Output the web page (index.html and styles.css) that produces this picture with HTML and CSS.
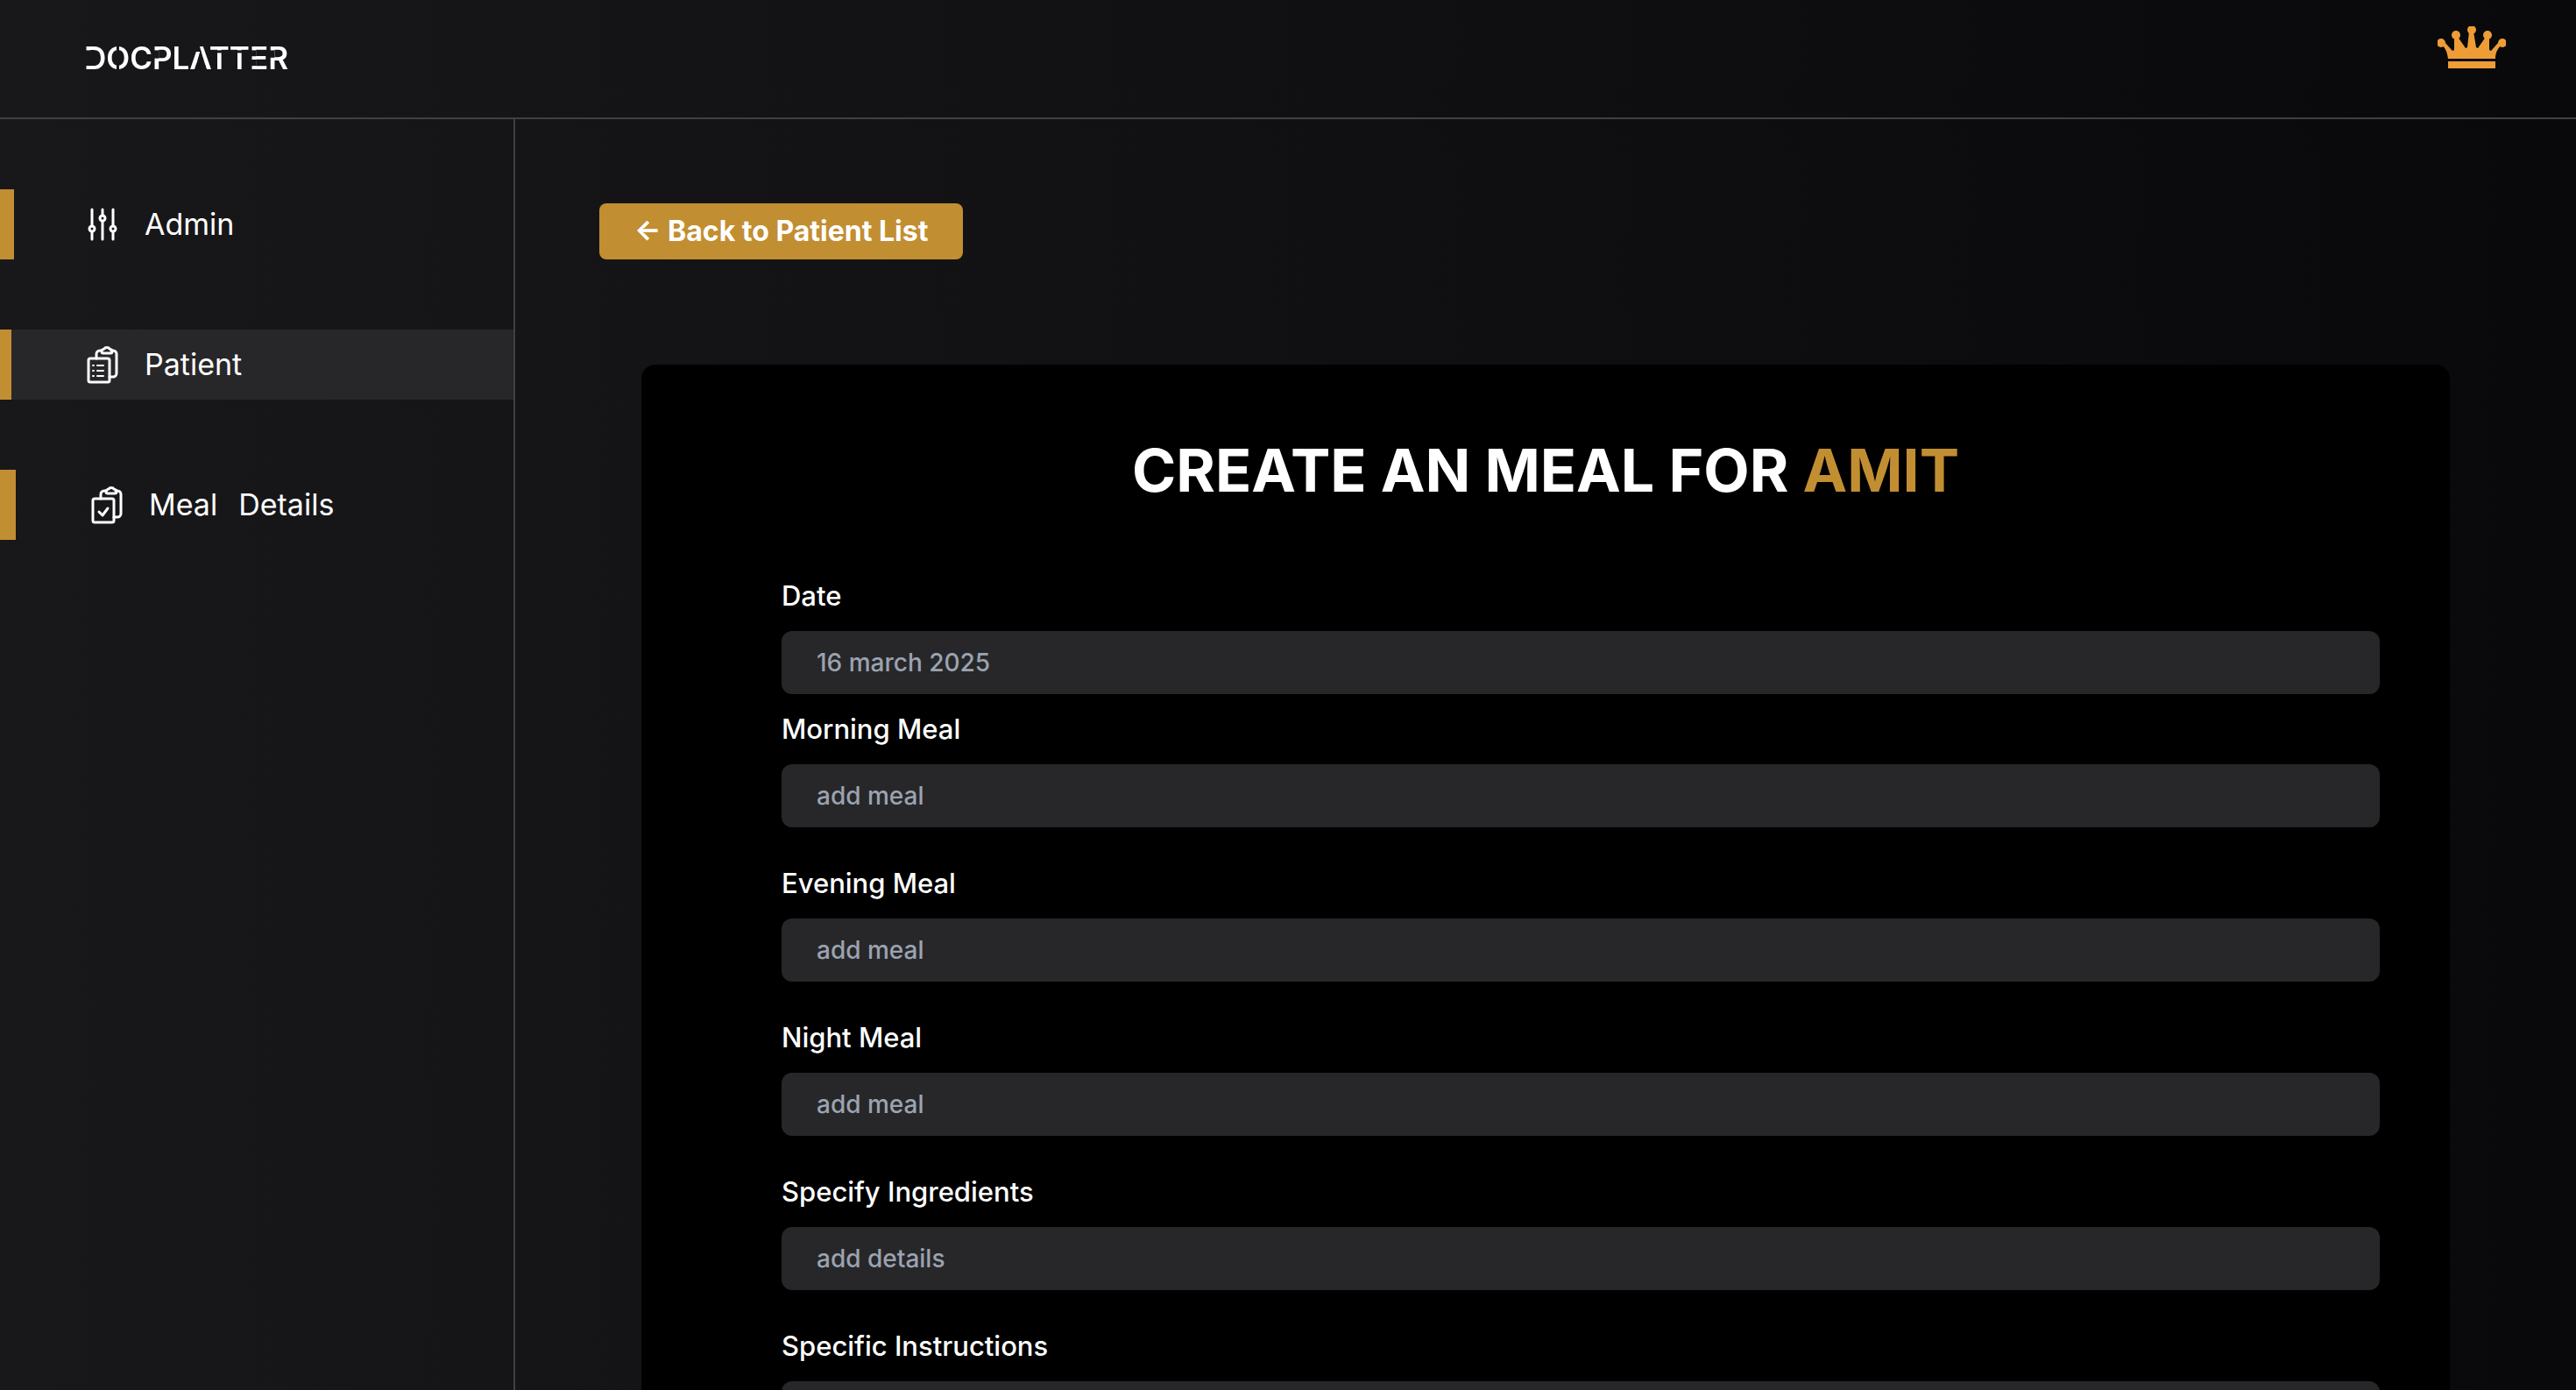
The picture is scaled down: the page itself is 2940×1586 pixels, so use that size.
FILE: index.html
```html
<!DOCTYPE html>
<html lang="en">
<head>
<meta charset="utf-8">
<title>Docplatter</title>
<link rel="stylesheet" href="styles.css">
</head>
<body>
<header class="topbar">
  <a class="logo" href="#" aria-label="Docplatter home">
    <svg class="wordmark" viewBox="0 0 260 40" aria-hidden="true">
      <!-- Stencil cuts through the letters -->
      <mask id="stencil" maskUnits="userSpaceOnUse" x="0" y="0" width="260" height="40">
        <rect width="260" height="40" fill="#fff"/>
        <g fill="#000">
          <rect x="0" y="10.4" width="8" height="17.7"/>
          <rect x="37" y="0" width="3" height="40"/>
          <rect x="78" y="10.4" width="7.3" height="9.2"/>
          <path d="M133 10.4L139.9 32H126.2Z"/>
          <path d="M120 0H130.500L133.500 12H120Z"/>
          <rect x="144" y="10.4" width="45" height="3"/>
          <rect x="189" y="10.4" width="7.2" height="6.8"/>
          <rect x="189" y="21" width="7.2" height="7.1"/>
          <rect x="211" y="10.4" width="6.4" height="8.4"/>
        </g>
      </mask>
      <text x="0" y="32" mask="url(#stencil)">DOCPLATTER</text>
    </svg>
  </a>
  <a class="premium" href="#" aria-label="Premium">
    <svg class="crown" viewBox="0 0 78 48" aria-hidden="true">
      <path d="M12 37 C11 29 9 25 4 20 L9 19 L17 28 L19 27 L19 12 L23 12 L32 25 L34 24 L36 6 L41 6 L44 24 L46 25 L55 12 L59 12 L59 27 L61 28 L69 19 L74 20 C69 25 66 29 66 37 Z"/>
      <rect x="12" y="40" width="54" height="8"/>
      <circle cx="4" cy="19" r="5"/><circle cx="21" cy="10" r="5"/><circle cx="39" cy="4" r="5"/><circle cx="57" cy="10" r="5"/><circle cx="74" cy="19" r="5"/>
    </svg>
  </a>
</header>
<div class="layout">
  <nav class="sidebar" aria-label="Main">
    <a class="nav-item" href="#">
      <svg class="icon" viewBox="0 0 48 48" aria-hidden="true"><path d="M12 7v18M12 33v8M24 7v6M24 21v20M36 7v18M36 33v8"/><circle cx="12" cy="29" r="3"/><circle cx="24" cy="17" r="3"/><circle cx="36" cy="29" r="3"/></svg>
      <span>Admin</span>
    </a>
    <a class="nav-item active" href="#" aria-current="page">
      <svg class="icon" viewBox="0 0 48 48" aria-hidden="true"><path d="M17 17v-5a4 4 0 0 1 4-4h2M34 8h2a4 4 0 0 1 4 4v22a4 4 0 0 1-4 4h-4"/><path d="M25 11a2 2 0 0 1-2-2c0-2 1-2 3-3 1-2 5-2 6 0 2 1 3 1 3 3a2 2 0 0 1-2 2z"/><rect x="8" y="17" width="24" height="27" rx="2"/><path d="M18 25h7M18 31h7M18 37h7M13 25h1M13 31h1M13 37h1" stroke-width="2"/></svg>
      <span>Patient</span>
    </a>
    <a class="nav-item meals" href="#">
      <svg class="icon" viewBox="0 0 48 48" aria-hidden="true"><path d="M17 17v-5a4 4 0 0 1 4-4h2M34 8h2a4 4 0 0 1 4 4v22a4 4 0 0 1-4 4h-4"/><path d="M25 11a2 2 0 0 1-2-2c0-2 1-2 3-3 1-2 5-2 6 0 2 1 3 1 3 3a2 2 0 0 1-2 2z"/><rect x="8" y="17" width="24" height="27" rx="2"/><path d="M15 32l4 4 6-8"/></svg>
      <span>Meal</span><span>Details</span>
    </a>
  </nav>
  <main class="content">
    <button class="back" type="button">← Back to Patient List</button>
    <form class="card">
      <h1 class="title">CREATE AN MEAL FOR <span class="name">AMIT</span></h1>
      <div class="fields">
        <div class="field compact"><label for="date">Date</label><input id="date" type="text" placeholder="16 march 2025"></div>
        <div class="field"><label for="morning">Morning Meal</label><input id="morning" type="text" placeholder="add meal"></div>
        <div class="field"><label for="evening">Evening Meal</label><input id="evening" type="text" placeholder="add meal"></div>
        <div class="field"><label for="night">Night Meal</label><input id="night" type="text" placeholder="add meal"></div>
        <div class="field"><label for="ingredients">Specify Ingredients</label><input id="ingredients" type="text" placeholder="add details"></div>
        <div class="field"><label for="instructions">Specific Instructions</label><input id="instructions" type="text" placeholder="add details"></div>
      </div>
    </form>
  </main>
</div>
</body>
</html>
```

FILE: styles.css
```css
:root {
  --gold: #c28e32;
  --line: #3f3f46;
  --surface: #27272a;
}

* { box-sizing: border-box; }

body {
  margin: 0;
  height: 100vh;
  display: flex;
  flex-direction: column;
  overflow: hidden;
  background: linear-gradient(to right, #18181b, #09090b);
  color: #fff;
  font-family: Inter, "Liberation Sans", sans-serif;
  font-size: 31px;
  line-height: 48px;
}

a { color: inherit; text-decoration: none; }

.topbar {
  display: flex;
  justify-content: space-between;
  align-items: center;
  flex: none;
  height: 136px;
  padding: 0 80px 0 96px;
  border-bottom: 2px solid var(--line);
}

.logo, .premium { display: flex; }
.wordmark { width: 260px; height: 40px; fill: #fff; font-size: 35px; font-weight: 600; }
.crown { width: 78px; height: 48px; margin-bottom: 26px; fill: #ee9d36; }

.layout { display: flex; flex: 1; min-height: 0; }

.sidebar {
  display: flex;
  flex-direction: column;
  gap: 80px;
  width: 20%;
  padding-top: 80px;
  border-right: 2px solid var(--line);
}

.nav-item {
  display: flex;
  align-items: center;
  gap: 24px;
  height: 80px;
  padding-left: 77px;
  border-left: 16px solid var(--gold);
  font-size: 34px;
}
.nav-item.active { padding-left: 80px; border-left-width: 13px; background: var(--surface); }
.nav-item.meals { padding-left: 80px; border-left-width: 18px; }

.icon {
  width: 48px;
  height: 48px;
  fill: none;
  stroke: currentColor;
  stroke-width: 3;
  stroke-linecap: round;
  stroke-linejoin: round;
}

.content { flex: 1; padding: 96px; overflow: hidden; }

.back {
  display: block;
  padding: 8px 40px;
  border: 0;
  border-radius: 8px;
  background: var(--gold);
  color: #fff;
  font: 700 32px/48px Inter, "Liberation Sans", sans-serif;
}

.card {
  margin: 120px 48px 0;
  padding: 84px 80px 80px 160px;
  border-radius: 16px;
  background: #000;
}

.title {
  margin: 0 80px 84px 0;
  font-size: 68px;
  font-weight: 700;
  line-height: 72px;
  text-align: center;
}
.name { color: var(--gold); }

.fields { display: flex; flex-direction: column; }
.field { display: flex; flex-direction: column; gap: 16px; margin-bottom: 40px; font-weight: 500; }
.field.compact { margin-bottom: 16px; }

.field input {
  width: 100%;
  height: 72px;
  padding: 0 40px;
  border: 0;
  border-radius: 12px;
  background: var(--surface);
  color: #fff;
  font: 500 28px/40px Inter, "Liberation Sans", sans-serif;
}
.field input::placeholder { color: #9ca3af; opacity: 1; }
```
